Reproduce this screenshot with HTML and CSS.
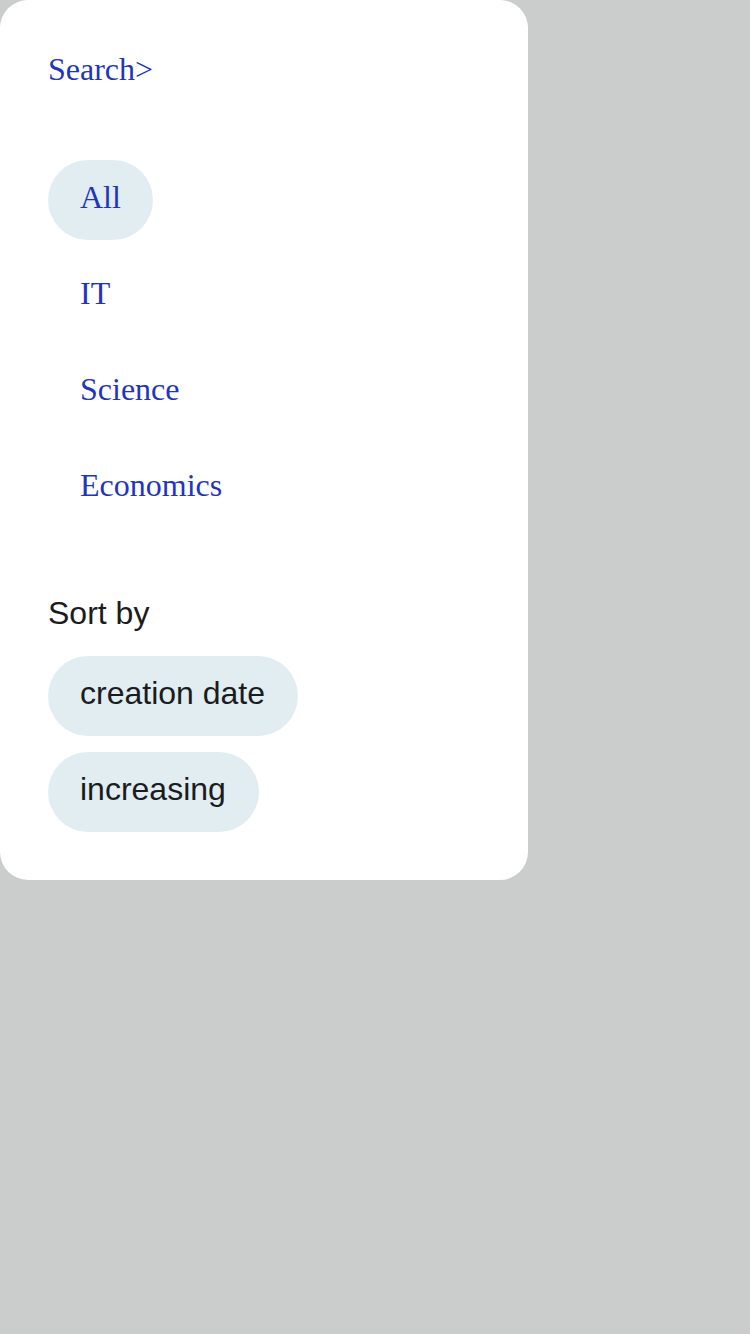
FILE: index.html
```html
<!DOCTYPE html>
<html>
<head>
<meta charset="utf-8">
<link rel="stylesheet" href="styles.css">
</head>
<body>
<div class="panel">
  <div class="search">Search&gt;</div>
  <ul class="cats">
    <li class="chip cat active">All</li>
    <li class="chip cat">IT</li>
    <li class="chip cat">Science</li>
    <li class="chip cat">Economics</li>
  </ul>
  <div class="sort-title">Sort by</div>
  <ul class="sorts">
    <li class="chip sort">creation date</li>
    <li class="chip sort">increasing</li>
  </ul>
</div>
</body>
</html>
```
FILE: styles.css
```css
html, body {
  margin: 0;
  padding: 0;
  background: #cbcdcd;
  width: 750px;
  height: 1334px;
}
.panel {
  width: 528px;
  box-sizing: border-box;
  background: #ffffff;
  border-radius: 28px;
  padding: 48px 48px 48px 48px;
  display: flex;
  flex-direction: column;
  align-items: flex-start;
}
.search {
  font-family: "Liberation Serif", serif;
  font-size: 32px;
  line-height: 42px;
  color: #1f35bf;
}
ul {
  list-style: none;
  margin: 0;
  padding: 0;
  display: flex;
  flex-direction: column;
  align-items: flex-start;
  gap: 16px;
}
.cats {
  margin-top: 70px;
}
.chip {
  height: 80px;
  line-height: 80px;
  padding: 0 32px;
  border-radius: 40px;
  font-size: 32px;
  white-space: nowrap;
}
.cat {
  font-family: "Liberation Serif", serif;
  color: #1f35bf;
  line-height: 74px;
}
.active {
  background: #e1edf1;
}
.sort-title {
  margin-top: 61px;
  font-family: "Liberation Sans", Arial, sans-serif;
  font-size: 32px;
  line-height: 48px;
  color: #1a1c1e;
}
.sorts {
  margin-top: 19px;
}
.sort {
  font-family: "Liberation Sans", Arial, sans-serif;
  color: #1a1c1e;
  background: #e1edf1;
  line-height: 74px;
  padding: 0 33px 0 32px;
}
```
